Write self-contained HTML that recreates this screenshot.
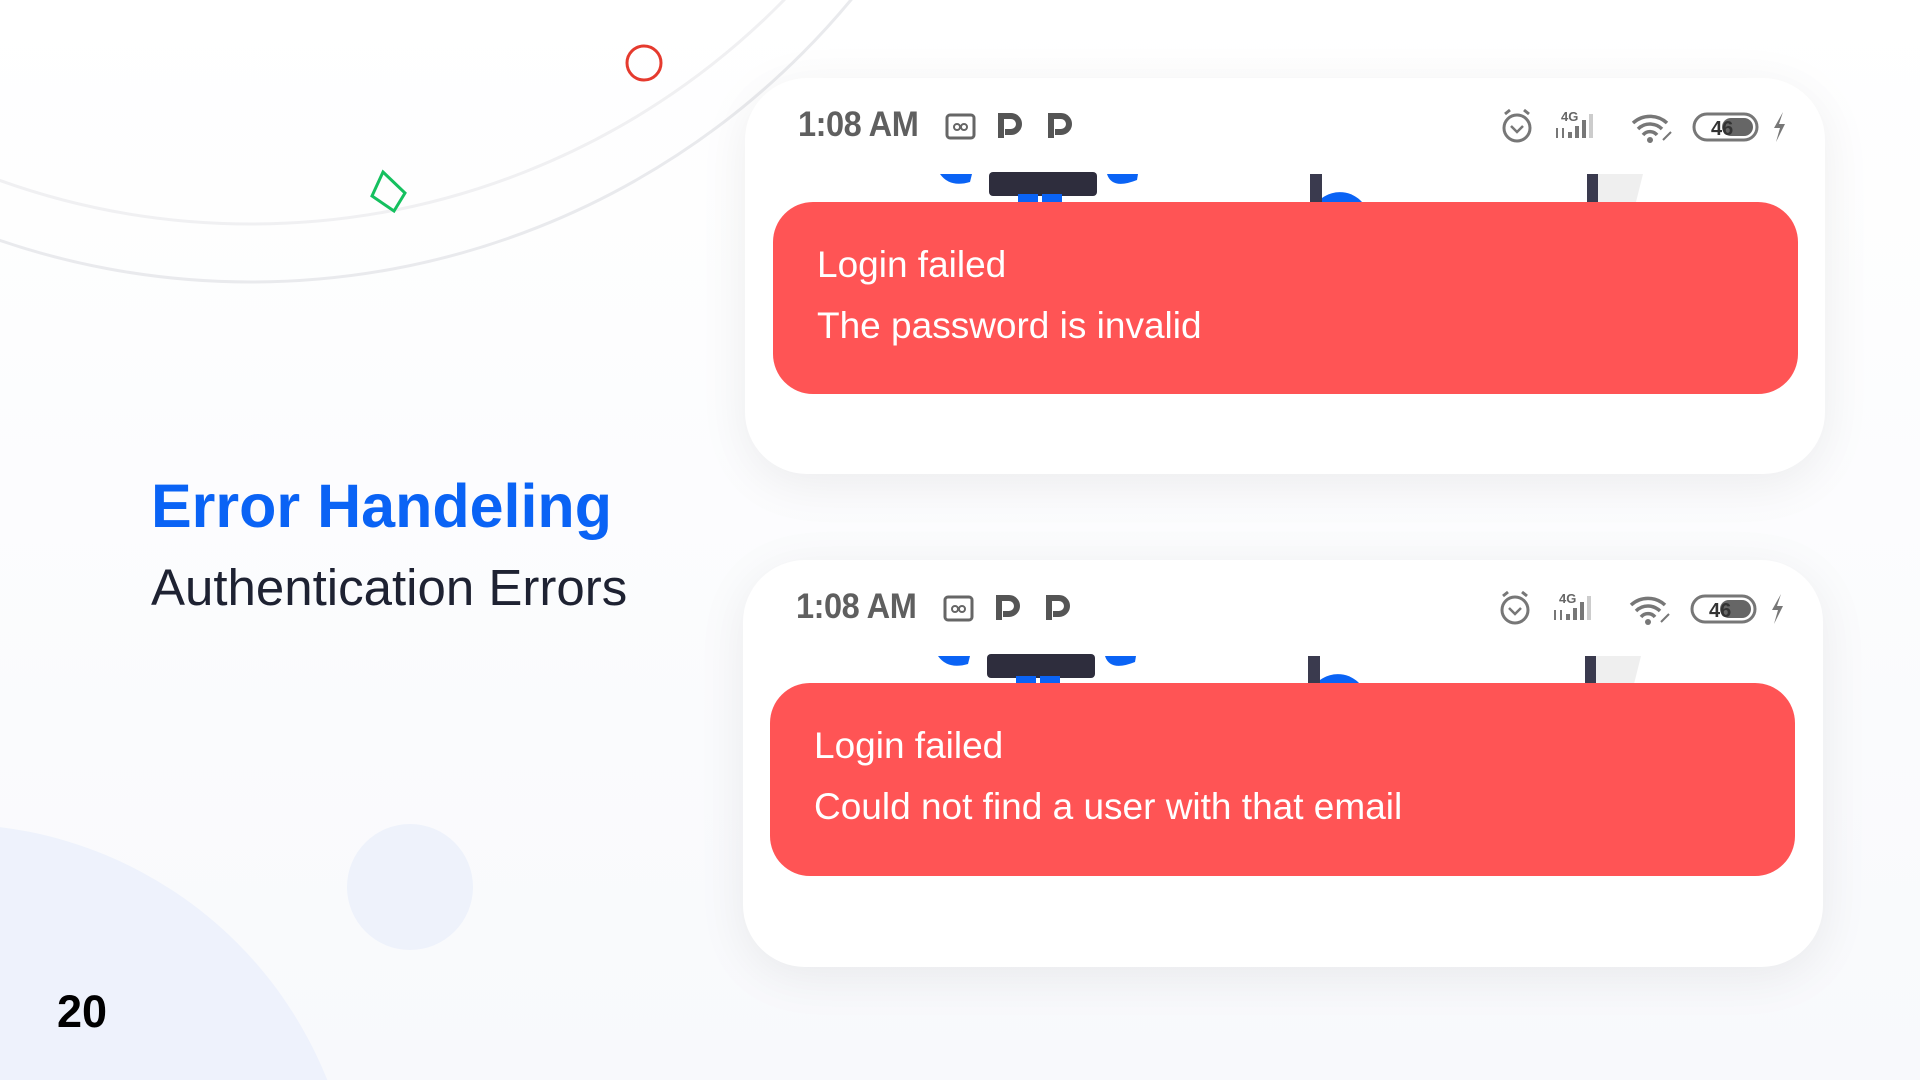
<!DOCTYPE html>
<html><head><meta charset="utf-8"><style>
html,body{margin:0;padding:0;width:1920px;height:1080px;overflow:hidden;}
body{position:relative;background:linear-gradient(180deg,#ffffff 0%,#f8f9fc 100%);font-family:"Liberation Sans",sans-serif;}
.card{position:absolute;background:#fff;border-radius:62px;box-shadow:0 10px 50px rgba(0,0,0,0.07);overflow:hidden;}
.time{position:absolute;font-size:35px;font-weight:bold;color:#5f5f5f;letter-spacing:-0.5px;transform:scaleX(0.93);transform-origin:left center;}
.bar{position:absolute;background:#ff5455;border-radius:40px;color:#fff;}
.bar div{position:absolute;left:44px;font-size:37px;white-space:nowrap;}
.abs{position:absolute;}
</style></head><body>
<svg class="abs" style="left:0;top:0" width="1920" height="1080">
<circle cx="251" cy="-522" r="746" fill="none" stroke="#f0f0f2" stroke-width="3"/>
<circle cx="251" cy="-497" r="779" fill="none" stroke="#e9eaed" stroke-width="3"/>
<circle cx="644" cy="63" r="17" fill="none" stroke="#e53a2e" stroke-width="3"/>
<polygon points="383,172 405,193 394,211 372,196" fill="none" stroke="#15c05f" stroke-width="3"/>
<circle cx="-50" cy="1230" r="406" fill="#eef2fc"/>
<circle cx="410" cy="887" r="63" fill="#eef2fb"/>
</svg>
<div class="abs" style="left:151px;top:471px;font-size:61px;font-weight:bold;color:#0a63f5;">Error Handeling</div>
<div class="abs" style="left:151px;top:558px;font-size:51px;color:#1e2232;">Authentication Errors</div>
<div class="abs" style="left:57px;top:986px;font-size:45px;font-weight:bold;color:#000;">20</div>

<div class="card" style="left:745px;top:78px;width:1080px;height:396px;">
  <div class="time" style="left:53px;top:27px;">1:08 AM</div>
  <svg class="abs" style="left:0;top:0" width="1080" height="200">
    <rect x="202" y="37" width="27" height="23" rx="3" fill="none" stroke="#666" stroke-width="3"/>
    <circle cx="212" cy="49" r="3" fill="none" stroke="#666" stroke-width="2"/><circle cx="219" cy="49" r="3" fill="none" stroke="#666" stroke-width="2"/>
    <path d="M256 60 V38 H266 a8 8 0 0 1 0 16 H260" fill="none" stroke="#555" stroke-width="6"/>
    <path d="M306 60 V38 H316 a8 8 0 0 1 0 16 H310" fill="none" stroke="#555" stroke-width="6"/>
    <circle cx="772" cy="50" r="13" fill="none" stroke="#777" stroke-width="3"/><path d="M766 48 l6 6 6-6" fill="none" stroke="#777" stroke-width="2.5"/>
    <path d="M760 36 l5-4 M784 36 l-5-4" stroke="#777" stroke-width="3"/>
    <text x="816" y="43" font-size="13" fill="#666" font-weight="bold">4G</text>
    <path d="M812 60 v-10 M818 60 v-10" stroke="#777" stroke-width="2"/>
    <rect x="823" y="54" width="4" height="6" fill="#777"/><rect x="830" y="48" width="4" height="12" fill="#777"/><rect x="837" y="42" width="4" height="18" fill="#777"/><rect x="844" y="36" width="4" height="24" fill="#ccc"/>
    <path d="M888 45 a25 25 0 0 1 34 0 M893 51 a17 17 0 0 1 24 0 M898 57 a9 9 0 0 1 14 0" fill="none" stroke="#777" stroke-width="3.5"/><circle cx="905" cy="62" r="3" fill="#777"/>
    <path d="M918 62 l8 -8" stroke="#777" stroke-width="2"/>
    <rect x="949" y="36" width="63" height="26" rx="13" fill="none" stroke="#777" stroke-width="3"/>
    <rect x="977" y="40" width="31" height="18" rx="9" fill="#666"/>
    <text x="966" y="57" font-size="20" font-weight="bold" fill="#333">46</text>
    <path d="M1038 34 l-9 16 h6 l-4 14 9-18 h-6 z" fill="#777"/>
    <path d="M195 96 q10 14 30 8 l2-8 z" fill="#0a63f5"/>
    <rect x="244" y="94" width="108" height="24" rx="4" fill="#2e2d3d"/>
    <rect x="273" y="116" width="20" height="12" fill="#0a63f5"/><rect x="297" y="116" width="20" height="12" fill="#0a63f5"/>
    <path d="M362 96 q5 16 30 6 l1-6 z" fill="#0a63f5"/>
    <rect x="565" y="96" width="12" height="40" fill="#3a3a4e"/>
    <path d="M577 120 a30 30 0 0 1 40 4 l-40 0z" fill="#0a63f5"/>
    <rect x="842" y="96" width="11" height="40" fill="#3a3a4e"/>
    <path d="M853 96 h45 l-10 40 h-35 z" fill="#efefef"/>
  </svg>
  <div class="bar" style="left:28px;top:124px;width:1025px;height:192px;">
    <div style="top:42px;">Login failed</div>
    <div style="top:103px;">The password is invalid</div>
  </div>
</div>

<div class="card" style="left:743px;top:560px;width:1080px;height:407px;">
  <div class="time" style="left:53px;top:27px;">1:08 AM</div>
  <svg class="abs" style="left:0;top:0" width="1080" height="200">
    <rect x="202" y="37" width="27" height="23" rx="3" fill="none" stroke="#666" stroke-width="3"/>
    <circle cx="212" cy="49" r="3" fill="none" stroke="#666" stroke-width="2"/><circle cx="219" cy="49" r="3" fill="none" stroke="#666" stroke-width="2"/>
    <path d="M256 60 V38 H266 a8 8 0 0 1 0 16 H260" fill="none" stroke="#555" stroke-width="6"/>
    <path d="M306 60 V38 H316 a8 8 0 0 1 0 16 H310" fill="none" stroke="#555" stroke-width="6"/>
    <circle cx="772" cy="50" r="13" fill="none" stroke="#777" stroke-width="3"/><path d="M766 48 l6 6 6-6" fill="none" stroke="#777" stroke-width="2.5"/>
    <path d="M760 36 l5-4 M784 36 l-5-4" stroke="#777" stroke-width="3"/>
    <text x="816" y="43" font-size="13" fill="#666" font-weight="bold">4G</text>
    <path d="M812 60 v-10 M818 60 v-10" stroke="#777" stroke-width="2"/>
    <rect x="823" y="54" width="4" height="6" fill="#777"/><rect x="830" y="48" width="4" height="12" fill="#777"/><rect x="837" y="42" width="4" height="18" fill="#777"/><rect x="844" y="36" width="4" height="24" fill="#ccc"/>
    <path d="M888 45 a25 25 0 0 1 34 0 M893 51 a17 17 0 0 1 24 0 M898 57 a9 9 0 0 1 14 0" fill="none" stroke="#777" stroke-width="3.5"/><circle cx="905" cy="62" r="3" fill="#777"/>
    <path d="M918 62 l8 -8" stroke="#777" stroke-width="2"/>
    <rect x="949" y="36" width="63" height="26" rx="13" fill="none" stroke="#777" stroke-width="3"/>
    <rect x="977" y="40" width="31" height="18" rx="9" fill="#666"/>
    <text x="966" y="57" font-size="20" font-weight="bold" fill="#333">46</text>
    <path d="M1038 34 l-9 16 h6 l-4 14 9-18 h-6 z" fill="#777"/>
    <path d="M195 96 q10 14 30 8 l2-8 z" fill="#0a63f5"/>
    <rect x="244" y="94" width="108" height="24" rx="4" fill="#2e2d3d"/>
    <rect x="273" y="116" width="20" height="12" fill="#0a63f5"/><rect x="297" y="116" width="20" height="12" fill="#0a63f5"/>
    <path d="M362 96 q5 16 30 6 l1-6 z" fill="#0a63f5"/>
    <rect x="565" y="96" width="12" height="40" fill="#3a3a4e"/>
    <path d="M577 120 a30 30 0 0 1 40 4 l-40 0z" fill="#0a63f5"/>
    <rect x="842" y="96" width="11" height="40" fill="#3a3a4e"/>
    <path d="M853 96 h45 l-10 40 h-35 z" fill="#efefef"/>
  </svg>
  <div class="bar" style="left:27px;top:123px;width:1025px;height:193px;">
    <div style="top:42px;">Login failed</div>
    <div style="top:103px;">Could not find a user with that email</div>
  </div>
</div>
</body></html>
